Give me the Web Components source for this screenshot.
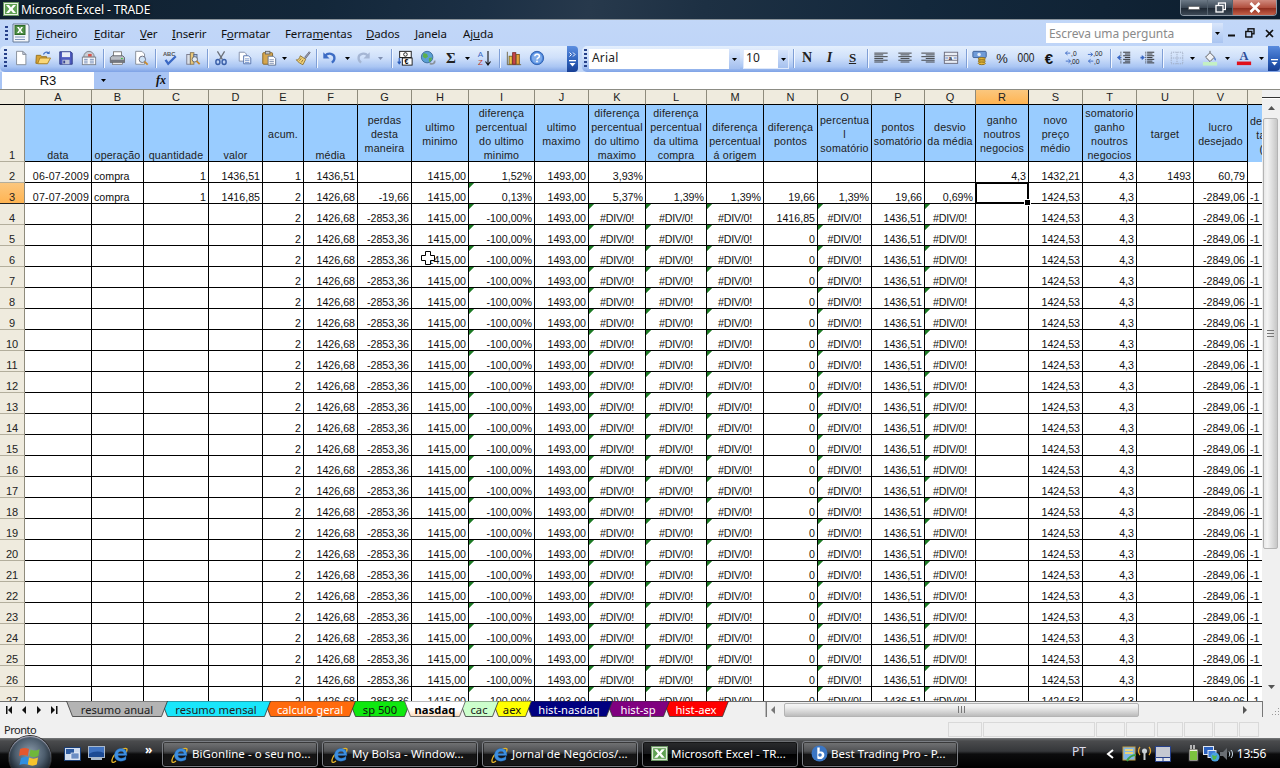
<!DOCTYPE html>
<html lang="pt">
<head>
<meta charset="utf-8">
<title>Microsoft Excel - TRADE</title>
<style>
html,body{margin:0;padding:0;width:1280px;height:768px;overflow:hidden;background:#f0f0f0}
body{display:flex;flex-direction:column;font-family:"Noto Sans","Liberation Sans",sans-serif}
</style>
</head>
<body>
<xl-titlebar>Microsoft Excel - TRADE</xl-titlebar>
<xl-menubar></xl-menubar>
<xl-toolbars></xl-toolbars>
<xl-formula cell="R3"></xl-formula>
<xl-sheet></xl-sheet>
<xl-tabs>
  <xl-tab w="102" bg="#b4b4b4" fg="#222" z="20">resumo anual</xl-tab>
  <xl-tab w="110" bg="#19e6fb" fg="#222" z="19">resumo mensal</xl-tab>
  <xl-tab w="92" bg="#ff6a0c" fg="#fff" z="18">calculo geral</xl-tab>
  <xl-tab w="62" bg="#0fe80f" fg="#111" z="17">sp 500</xl-tab>
  <xl-tab w="62" bg="#ffffff" fg="#000" z="30" active>nasdaq</xl-tab>
  <xl-tab w="40" bg="#ccffcc" fg="#222" z="15">cac</xl-tab>
  <xl-tab w="40" bg="#ffff00" fg="#111" z="14">aex</xl-tab>
  <xl-tab w="88" bg="#000080" fg="#fff" z="13">hist-nasdaq</xl-tab>
  <xl-tab w="64" bg="#800080" fg="#fff" z="12">hist-sp</xl-tab>
  <xl-tab w="66" bg="#ff0000" fg="#fff" z="11">hist-aex</xl-tab>
</xl-tabs>
<xl-status>Pronto</xl-status>
<xl-taskbar>
  <xl-taskbtn icon="ie">BiGonline - o seu no...</xl-taskbtn>
  <xl-taskbtn icon="ie">My Bolsa - Window...</xl-taskbtn>
  <xl-taskbtn icon="ie">Jornal de Negócios/...</xl-taskbtn>
  <xl-taskbtn icon="xl" active>Microsoft Excel - TR...</xl-taskbtn>
  <xl-taskbtn icon="b">Best Trading Pro - P...</xl-taskbtn>
</xl-taskbar>
<script>
const svg=(w,h,b,vb)=>`<svg xmlns="http://www.w3.org/2000/svg" width="${w}" height="${h}" viewBox="${vb||`0 0 ${w} ${h}`}" style="display:block">${b}</svg>`;
const drop=svg(5,3,'<path d="M0 0h5L2.500 3z" fill="#000"/>');
const dropG=svg(5,3,'<path d="M0 0h5L2.500 3z" fill="#7f8fb0"/>');
const excelIcon=(s)=>svg(s,s,'<rect x=".5" y="1.500" width="15" height="13" fill="#e8f2e2" stroke="#6d9a65"/><rect x="2" y="3" width="12" height="10" fill="#5fa052"/><path d="M3 4h3l2 2.500L10 4h3l-3.400 4L13 12h-3L8 9.500 6 12H3l3.400-4z" fill="#fff"/>','0 0 16 16');
const ieIcon=(s)=>svg(s,s,'<path d="M5 16c-2.500 2-4.500 2-4-1 .4-2 3-6.500 8-9.500 3-1.800 5.500-2.800 6.700-1.700 1 1-.4 3-1 4" fill="none" stroke="#e5b62a" stroke-width="1.300"/><path d="M3.500 10.500C3.500 6 6.500 3.500 10 3.500S16 6 16 10.500H7c.1 3 4.500 4 8 .6v3.400c-4 3-11.500 2-11.500-4zM7 8.500h5.800C12.600 5.500 7.400 5.500 7 8.500z" fill="#3d8fe0" stroke="#1a5aa8" stroke-width=".4"/>','0 0 18 18');
const I={
new:'<path d="M4 1.500h7l3.500 3.500v11.500H4z" fill="#fff" stroke="#7f8794"/><path d="M11 1.500V5h3.500z" fill="#d5deee" stroke="#7f8794"/>',
open:'<path d="M1.500 6h5l1 1.500h5.500V15h-12z" fill="#d6a235" stroke="#94701f"/><path d="M3 15.500l2.500-6.500h12l-3.500 6.500z" fill="#fbd878" stroke="#a67d20"/><path d="M9.500 5C10.500 2.500 13 1.500 15.500 3" fill="none" stroke="#3f6ec4" stroke-width="1.400"/><path d="M16.500 1v3.500H13z" fill="#3f6ec4"/>',
save:'<path d="M2 2h12.500L16 3.500V16H2z" fill="#4f5cc0" stroke="#2c3680"/><rect x="4.500" y="2.500" width="9" height="5.500" fill="#e8ecf7"/><rect x="5" y="11" width="8" height="5" fill="#bfc6d8"/><rect x="6" y="12" width="2" height="3" fill="#3a4590"/>',
perm:'<path d="M3 8c0-4 3-6.500 6-6.500S15 4 15 8z" fill="#c9ccd3" stroke="#7a7f88"/><rect x="8" y="4.500" width="4" height="3" fill="#d9534a"/><rect x="1.500" y="8" width="15" height="8.500" fill="#f6f7f9" stroke="#7a7f88"/><path d="M3.500 10.500h4M3.500 12.500h4M3.500 14.500h4M10 10.500h4.500M10 12.500h4.500M10 14.500h4.500" stroke="#6c87b8"/>',
print:'<rect x="5" y="2" width="9" height="6" fill="#fff" stroke="#777"/><path d="M1.500 8.500l2-2h12l2 2V14h-16z" fill="#b9bdc4" stroke="#5c6068"/><rect x="1.500" y="11" width="16" height="3.500" fill="#73777f"/><rect x="4" y="14" width="11" height="2.500" fill="#e8e8e8" stroke="#666" stroke-width=".7"/><rect x="13.500" y="9" width="2" height="1.300" fill="#3ecb45"/>',
preview:'<path d="M3 1.500h7l3 3v11.500H3z" fill="#fff" stroke="#7f8794"/><circle cx="10.500" cy="10.500" r="3.600" fill="#cfe3f6" stroke="#667"/><path d="M13 13l3.500 3.500" stroke="#c9892a" stroke-width="2"/>',
spell:'<text x="1" y="6.500" font-size="6.500" font-weight="700" font-family="Liberation Sans" fill="#555">ABC</text><path d="M4 11l3 4.500L15.500 7" fill="none" stroke="#3a68c4" stroke-width="2.600"/>',
research:'<rect x="2" y="5" width="4" height="11" fill="#d9dfe8" stroke="#778"/><rect x="6" y="3" width="4" height="13" fill="#e9c87a" stroke="#875"/><rect x="10" y="5" width="3.500" height="8" fill="#aac4e8" stroke="#568"/><circle cx="11" cy="10.500" r="3" fill="#dfeaf6" stroke="#666"/><path d="M13 12.500l3.500 3.500" stroke="#c9892a" stroke-width="2"/>',
cut:'<path d="M5 1.500l5.500 9M13 1.500l-5.500 9" stroke="#6a6f78" stroke-width="1.400" fill="none"/><ellipse cx="5.500" cy="13.500" rx="2.300" ry="2.800" fill="none" stroke="#3a5fa8" stroke-width="1.600"/><ellipse cx="12.500" cy="13.500" rx="2.300" ry="2.800" fill="none" stroke="#3a5fa8" stroke-width="1.600"/>',
copy:'<path d="M2.500 2.500h6l2 2v8h-8z" fill="#fff" stroke="#7d8aa5"/><path d="M7.500 6.500h5.500l2.500 2.500v6.500h-8z" fill="#fff" stroke="#4a6aa8"/><path d="M9 10h5M9 12h5M9 14h5" stroke="#6f8fc8"/>',
paste:'<rect x="2" y="3" width="11" height="13" rx="1" fill="#d6a64e" stroke="#7e5f20"/><rect x="5" y="1.500" width="5" height="3" fill="#c8ccd3" stroke="#666"/><path d="M8 7h6l2.500 2.500V17H8z" fill="#fff" stroke="#5a6c8a"/><path d="M9.500 11h5M9.500 13h5M9.500 15h5" stroke="#7c8db0"/>',
painter:'<path d="M11 8L16 2l1 1-5 6.500z" fill="#a8adb8" stroke="#667"/><path d="M6 6.500l6 4-3 6c-2-.5-6-3-7.500-5.500 2 .5 3.500-1 4.500-4.500z" fill="#f0d078" stroke="#8a7030"/><path d="M5 12l2-2.500M7 14l2-3" stroke="#8a7030" fill="none"/>',
undo:'<path d="M3.500 6.500C7 2.500 14 4 14 9c0 2-1 4-3 5" fill="none" stroke="#3d6cc4" stroke-width="2.600"/><path d="M1.500 2.500v7h7z" fill="#3d6cc4"/>',
redo:'<path d="M14.500 6.500C11 2.500 4 4 4 9c0 2 1 4 3 5" fill="none" stroke="#a5b6d4" stroke-width="2.600"/><path d="M16.500 2.500v7h-7z" fill="#a5b6d4"/>',
euro:'<rect x="3" y="1.500" width="13" height="7" fill="#fff" stroke="#111"/><rect x="6" y="9" width="11" height="8" fill="#fff" stroke="#111"/><text x="8.500" y="15.800" font-size="8" font-weight="700" font-family="Liberation Sans" fill="#000">€</text><circle cx="9.500" cy="5" r="2" fill="none" stroke="#111"/><path d="M2.500 9v6M.8 13l1.700 2.500L4.200 13" fill="none" stroke="#2a5bb8" stroke-width="1.300"/>',
globe:'<circle cx="8" cy="8" r="6.500" fill="#5a9fd4" stroke="#3a6a98"/><path d="M4 3.500l4 1 1 3-3 2-3-2zM10 9l3.500-.5-1 4-2.500 1z" fill="#5cb04a"/><path d="M11 15c3 1.500 6 0 5.500-3" fill="none" stroke="#8a929c" stroke-width="2"/>',
chart:'<path d="M1.500 2v14.500H17" fill="none" stroke="#6a6040"/><rect x="3.500" y="7" width="3.500" height="9" fill="#e8c44a" stroke="#7a6420"/><rect x="7.500" y="3" width="3.500" height="13" fill="#c9454a" stroke="#7a2a2a"/><rect x="11.500" y="5" width="3.500" height="11" fill="#e9a23b" stroke="#7a5a20"/>',
help:'<circle cx="9" cy="9" r="7.500" fill="#4b86dc" stroke="#2c5cab"/><circle cx="9" cy="9" r="5.800" fill="#7eabea"/><path d="M6.500 7c.3-3 5.200-3 5.200 0 0 2-2.700 1.800-2.700 3.800" fill="none" stroke="#fff" stroke-width="1.700"/><rect x="8.100" y="12" width="1.800" height="1.800" fill="#fff"/>',
alignL:'<path d="M1.500 3.500h15M1.500 5.500h10M1.500 7.500h15M1.500 9.500h10M1.500 11.500h15M1.500 13.500h10" stroke="#333"/>',
alignC:'<path d="M1.500 3.500h15M4 5.500h10M1.500 7.500h15M4 9.500h10M1.500 11.500h15M4 13.500h10" stroke="#333"/>',
alignR:'<path d="M1.500 3.500h15M6.500 5.500h10M1.500 7.500h15M6.500 9.500h10M1.500 11.500h15M6.500 13.500h10" stroke="#333"/>',
merge:'<rect x="1.500" y="2.500" width="15" height="12.500" fill="#e9eef6" stroke="#667"/><rect x="1.500" y="6.500" width="15" height="5" fill="#fff" stroke="#667"/><text x="6.500" y="10.700" font-size="6.500" font-weight="700" font-family="Liberation Sans" fill="#223">a</text><path d="M2.500 9H6M15.500 9H12" stroke="#3a68c4"/>',
curr:'<rect x="1" y="1.500" width="15" height="7" rx="1" fill="#6f9bd8" stroke="#3a5a90"/><circle cx="8" cy="5" r="2" fill="#dfeaf8"/><ellipse cx="11" cy="10" rx="4" ry="1.500" fill="#e8b93a" stroke="#8a6a18"/><ellipse cx="11" cy="12.500" rx="4" ry="1.500" fill="#e8b93a" stroke="#8a6a18"/><ellipse cx="11" cy="15" rx="4" ry="1.500" fill="#e8b93a" stroke="#8a6a18"/>',
outd:'<path d="M8 2.500h8M10 4.500h6M8 6.500h8M10 8.500h6M8 10.500h8M10 12.500h6M8 14.500h8" stroke="#222"/><path d="M5.500 2v14" stroke="#222" stroke-dasharray="1 1"/><path d="M1 8.500L4.500 5.500v2h1v2h-1v2z" fill="#3a68c4"/>',
ind:'<path d="M8 2.500h8M8 4.500h6M8 6.500h8M8 8.500h6M8 10.500h8M8 12.500h6M8 14.500h8" stroke="#222"/><path d="M6.500 2v14" stroke="#222" stroke-dasharray="1 1"/><path d="M5.500 8.500L2 5.500v2H.5v2H2v2z" fill="#3a68c4"/>',
border:'<rect x="2.500" y="2.500" width="13" height="13" fill="none" stroke="#98a4b8" stroke-dasharray="1 1"/><path d="M9 2.500v13M2.500 9h13" stroke="#98a4b8" stroke-dasharray="1 1"/>',
fill:'<path d="M4 8l5-5 5 5-5 5z" fill="#eef1f6" stroke="#555"/><path d="M9 3V1" stroke="#555"/><path d="M14 8c1.500 1.500 2 3 1 4-1-.5-1.500-2-1-4z" fill="#3a68c4"/><rect x="1" y="13.500" width="16" height="4" fill="#c4f0c4"/>',
color:'<text x="9" y="11.500" text-anchor="middle" font-size="14" font-weight="700" font-family="Liberation Serif" fill="#2c4c98">A</text><rect x="1" y="13" width="16" height="4" fill="#e0101c"/>',
inc:'<path d="M7 3.500H2M4 1.500l-2.500 2L4 5.500M2 12.500h5M5 10.500l2.500 2L5 14.500" stroke="#3a68c4" fill="none"/><text x="8" y="7" font-size="7.500" font-family="Liberation Sans" fill="#222">,0</text><text x="7" y="15.500" font-size="7.500" font-family="Liberation Sans" fill="#222">,00</text>',
dec:'<path d="M7 12.500H2M4 10.500l-2.500 2L4 14.500" stroke="#3a68c4" fill="none"/><path d="M1 5h5M4 3l2.500 2L4 7" stroke="#3a68c4" fill="none"/><text x="7" y="7" font-size="7.500" font-family="Liberation Sans" fill="#222">,00</text><text x="8" y="15.500" font-size="7.500" font-family="Liberation Sans" fill="#222">,0</text>'
};
const ic=n=>svg(16,16,I[n],'0 0 18 18');
const def=(name,html)=>{customElements.define(name,class extends HTMLElement{
  constructor(){super();this.attachShadow({mode:'open'});if(typeof html!=='function')this.shadowRoot.innerHTML=html;}
  connectedCallback(){if(typeof html==='function'&&!this.shadowRoot.firstChild)this.shadowRoot.innerHTML=html(this);}
});};

def('xl-titlebar',`<style>
:host{display:flex;align-items:center;flex:none;height:18px;padding-bottom:1px;position:relative;
background:linear-gradient(100deg,#10202f 0%,#13273a 25%,#1c3045 38%,#27394c 46%,#1d3043 55%,#13283c 72%,#0d1e2e 100%);border-bottom:1px solid #8a949c;color:#fff;font:12px "Noto Sans","Open Sans",sans-serif}
.ic{margin:0 2px 0 3px;display:block}
.t{flex:1;text-shadow:0 0 3px #000;letter-spacing:-.12px}
.btns{display:flex;height:16px;margin:0 3px 0 0;align-self:flex-start;border:1px solid #8c98a4;border-top:0;border-radius:0 0 4px 4px;overflow:hidden;box-sizing:border-box}
.b{display:flex;align-items:center;justify-content:center;border-right:1px solid #55626e;background:linear-gradient(#6d7a87,#3c4855 50%,#1c2631 52%,#3e4a57)}
.c{background:linear-gradient(#d08a7e,#b2503f 50%,#8c2a1c 52%,#c46048);border:0}
</style>
<span class="ic">${excelIcon(16)}</span><span class="t"><slot></slot></span>
<div class="btns">
<div class="b" style="width:26px">${svg(12,4,'<rect x=".5" y=".5" width="11" height="3" fill="#fff" stroke="#555" stroke-width=".6"/>')}</div>
<div class="b" style="width:24px">${svg(11,11,'<rect x="3.500" y="1" width="7" height="6.500" fill="none" stroke="#fff" stroke-width="1.300"/><rect x="1" y="3.500" width="7" height="6.500" fill="#404c58" stroke="#fff" stroke-width="1.300"/>')}</div>
<div class="b c" style="width:43px">${svg(12,11,'<path d="M1.500 1l9 9M10.500 1l-9 9" stroke="#fff" stroke-width="2.600"/>')}</div>
</div>`);

const menus=[['<u>F</u>icheiro',58],['<u>E</u>ditar',46],['<u>V</u>er',32],['<u>I</u>nserir',49],['F<u>o</u>rmatar',64],['Ferra<u>m</u>entas',81],['<u>D</u>ados',49],['<u>J</u>anela',48],['Aj<u>u</u>da',50]];
def('xl-menubar',`<style>
:host{display:flex;align-items:center;flex:none;height:26px;box-sizing:border-box;background:linear-gradient(#c2d7f8,#bfd5f8);color:#111;font:11.500px "Noto Sans","Open Sans",sans-serif;padding-left:5px;position:relative}
.g{width:3px;height:14px;margin-right:2px;background:repeating-linear-gradient(#27418a 0 2px,transparent 2px 4px)}
.d{width:22px;margin-right:4px}
.m{display:block;letter-spacing:-.15px}
.sp{flex:1}
.q{width:177px;height:20px;box-sizing:border-box;background:#fff;display:flex;align-items:center;color:#8a8a8a;font-size:12px;padding-left:3px;letter-spacing:-.05px}
.q span{flex:1}.q i{width:11px;align-self:stretch;background:linear-gradient(#d9e6fb,#a9c4f0);display:flex;align-items:center;justify-content:center}
.w{display:flex;align-items:center;padding-right:3px}
</style>
<span class="g"></span><span class="d">${svg(22,20,'<path d="M3 1h15l1 2v16H3z" fill="#f2f5fa" stroke="#667a98"/><rect x="5" y="2.500" width="10" height="9" fill="#4f8f45" stroke="#2e6a2a"/><path d="M7 4h2l1 2 1-2h2l-2 3 2 3h-2l-1-2-1 2H7l2-3z" fill="#fff"/><path d="M5 14h10M5 16.500h10" stroke="#7d93b8"/>')}</span>
${menus.map(m=>`<span class="m" style="width:${m[1]}px">${m[0]}</span>`).join('')}
<span class="sp"></span>
<span class="q"><span>Escreva uma pergunta</span><i>${drop}</i></span>
<span class="w">
<span style="width:16px;display:flex;justify-content:center">${svg(7,8,'<rect y="5.500" width="7" height="2" fill="#111"/>')}</span>
<span style="width:22px;display:flex;justify-content:center">${svg(10,10,'<rect x="3" y=".8" width="6" height="5" fill="none" stroke="#111" stroke-width="1.400"/><rect x=".8" y="3.500" width="6" height="5.500" fill="#c2d7f8" stroke="#111" stroke-width="1.400"/>')}</span>
<span style="width:16px;display:flex;justify-content:center">${svg(9,9,'<path d="M1 1l7 7M8 1L1 8" stroke="#111" stroke-width="1.600"/>')}</span>
</span>`);

const grip='G',sep='S',dr='D',drg='E';
const tb1=[[5.5,grip],[21,'new'],[43,'open'],[66,'save'],[89,'perm'],[103.5,sep],[117,'print'],[141,'preview'],[155.5,sep],[170,'spell'],[193,'research'],[207.5,sep],[221,'cut'],[245,'copy'],[269,'paste'],[284,dr],[303,'painter'],[316.5,sep],[330,'undo'],[347,dr],[363,'redo'],[380,drg],[391.5,sep],[405,'euro'],[428,'globe'],[451,['<span style="font:700 15px Liberation Serif;color:#222">Σ</span>',14]],[467,dr],[483,['<span style="display:flex;align-items:center">'+svg(9,16,'<text x="4.500" y="7" text-anchor="middle" font-size="8" font-family="Liberation Sans" fill="#3a68c4">A</text><text x="4.500" y="15" text-anchor="middle" font-size="8" font-family="Liberation Sans" fill="#c0392b">Z</text>')+svg(6,16,'<path d="M3 1v13M.5 11.500L3 15l2.500-3.500" fill="none" stroke="#111" stroke-width="1.100"/>')+'</span>',15]],[499.5,sep],[514,'chart'],[537,'help']];
const tb2=[[585,grip],[664.5,['<span class="sel" style="width:151px"><em>Arial</em><i>'+drop+'</i></span>',151]],[766,['<span class="sel" style="width:46px;outline:1px solid #dfe9fb;outline-offset:-1px"><em>10</em><i>'+drop+'</i></span>',46]],[793,sep],[807,['<b style="font:900 14px Liberation Serif;color:#222">N</b>',14]],[829.5,['<i style="font:italic 700 14px Liberation Serif;color:#222">I</i>',14]],[852.5,['<u style="font:700 13px Liberation Serif;color:#222">S</u>',14]],[867.5,sep],[881,'alignL'],[905,'alignC'],[928,'alignR'],[951,'merge'],[966,sep],[980,'curr'],[1002,['<span style="font:13px Liberation Sans;color:#222">%</span>',14]],[1026,['<span style="font:12px Liberation Sans;color:#222;display:inline-block;transform:scaleX(.85)">000</span>',18]],[1049,['<b style="font:900 15px Liberation Sans;color:#111">€</b>',14]],[1072,'inc'],[1095,'dec'],[1110,sep],[1124,'outd'],[1148,'ind'],[1162.5,sep],[1177,'border'],[1192,dr],[1210,'fill'],[1227,dr],[1244,'color'],[1261,dr]];
function row(list,start){let x=start,o='';for(const [c,k] of list){let w=18,h;
 if(k===grip){w=3;h='<span class="g"></span>'}else if(k===sep){w=1;h='<span class="s"></span>'}else if(k===dr){w=5;h=drop}else if(k===drg){w=5;h=dropG}else if(Array.isArray(k)){w=k[1];h=k[0]}else h=ic(k);
 const l=c-w/2-x;x=c+w/2;o+=`<span class="it" style="width:${w}px;margin-left:${l}px">${h}</span>`;}return o;}
const r1=row(tb1,0),r2=row(tb2,582);
const ovf=(w,hasTop)=>`<span class="ov" style="width:${w}px">${hasTop?svg(7,5,'<path d="M.5 .5L2.500 2.500.5 4.500M4 .5l2 2-2 2" fill="none" stroke="#fff"/>'):'<span style="height:5px"></span>'}${svg(7,7,'<rect width="7" height="1.300" y="0" fill="#fff"/><path d="M.5 3h6L3.500 6.500z" fill="#fff"/>')}</span>`;
def('xl-toolbars',`<style>
:host{display:flex;flex:none;height:26px;background:#c2d7f8;box-sizing:border-box;align-items:stretch;overflow:hidden}
.tb{display:flex;align-items:center;background:linear-gradient(#e4effd,#cfe0fa 45%,#a9c5f3 80%,#7fa3e6);border-radius:5px 0 0 5px;flex:none;height:26px;box-sizing:border-box;padding-bottom:2px}
.it{display:flex;flex:none;align-items:center;justify-content:center;height:24px;white-space:nowrap}
.g{width:3px;height:18px;background:repeating-linear-gradient(#27418a 0 2px,transparent 2px 4px)}
.s{width:1px;height:19px;background:#7f9fd6;box-shadow:1px 0 0 #f2f7ff}
.sel{display:flex;align-items:stretch;height:20px;margin-top:2px;box-sizing:border-box;background:#fff;font:12px "Noto Sans",sans-serif;color:#222;padding-left:3px;letter-spacing:.2px;justify-content:space-between}
.sel em{font-style:normal;line-height:17px}
.sel i{width:11px;flex:none;background:linear-gradient(#d9e6fb,#a3bfef);display:flex;align-items:center;justify-content:center}
.ov{display:flex;flex-direction:column;align-items:center;justify-content:center;gap:3px;flex:none;height:26px;background:linear-gradient(#5c8ee0,#2b5eb8 60%,#173f94);border-radius:0 4px 4px 0}
.ov span{display:block}
</style>
<div class="tb" style="width:567px">${r1}</div>${ovf(11,true)}
<div style="width:4px;background:#c2d7f8"></div>
<div class="tb" style="flex:1">${r2}<span style="flex:1"></span>${ovf(12,false)}</div>`);

def('xl-formula',(el)=>`<style>
:host{display:flex;flex:none;height:18px;box-sizing:border-box;background:#a8c4f4;border-bottom:1px solid #8c8c84;font:13px "Liberation Sans",sans-serif;color:#111}
.n{width:92px;box-sizing:border-box;background:#fff;height:17px;margin-left:2px;text-align:center;line-height:17px}
.d{display:flex;align-items:center;padding-left:7px;box-sizing:border-box;width:62px}
.f{width:13px;font:italic 700 12px "Liberation Serif",serif;line-height:16px;text-align:left}
.i{flex:1;background:#fff;height:17px}
</style><div class="n">${el.getAttribute('cell')}</div><div class="d">${drop}</div><div class="f">fx</div><div class="i"></div>`);

const edges=[24,91,143,208,262,303,357,411,468,534,588,645,706,763,817,871,924,975,1028,1082,1136,1193,1247];
const cols='ABCDEFGHIJKLMNOPQRSTUV'.split('').concat(['']);
const head=[['data','b'],['operação','b'],['quantidade','b'],['valor','b'],['acum.'],['média','b'],['perdas<br>desta<br>maneira'],['ultimo<br>minimo'],['diferença<br>percentual<br>do ultimo<br>minimo'],['ultimo<br>maximo'],['diferença<br>percentual<br>do ultimo<br>maximo'],['diferença<br>percentual<br>da ultima<br>compra'],['diferença<br>percentual<br>á origem','b'],['diferença<br>pontos'],['percentua<br>l<br>somatório'],['pontos<br>somatório'],['desvio<br>da média'],['ganho<br>noutros<br>negocios'],['novo<br>preço<br>médio'],['somatorio<br>ganho<br>noutros<br>negocios'],['target'],['lucro<br>desejado'],['de<br>&nbsp;&nbsp;ta<br>&nbsp;&nbsp;&nbsp;(','l']];
const D='#DIV/0!';
const r2d=['06-07-2009','compra','1','1436,51','1','1436,51','','1415,00','1,52%','1493,00','3,93%','','','','','','','4,3','1432,21','4,3','1493','60,79',''];
const r3d=['07-07-2009','compra','1','1416,85','2','1426,68','-19,66','1415,00','0,13%','1493,00','5,37%','1,39%','1,39%','19,66','1,39%','19,66','0,69%','','1424,53','4,3','','-2849,06','-1'];
const rN=n=>['','','','','2','1426,68','-2853,36','1415,00','-100,00%','1493,00',D,D,D,n,D,'1436,51',D,'','1424,53','4,3','','-2849,06','-1'];
function sheetHtml(){
 let w=[edges[0]+1];for(let i=1;i<edges.length;i++)w.push(edges[i]-edges[i-1]);w.push(60);
 let h=`<colgroup>${w.map(x=>`<col style="width:${x}px">`).join('')}</colgroup>`;
 h+=`<tr class="ch"><th></th>${cols.map(c=>`<th class="${c==='R'?'on':''}">${c}</th>`).join('')}</tr>`;
 h+=`<tr class="r1"><th class="rh">1</th>${head.map(c=>`<td class="${c[1]||'m'}"><div class="in">${c[0]}</div></td>`).join('')}</tr>`;
 for(let r=2;r<=27;r++){
  const d=r===2?r2d:r===3?r3d:rN(r===4?'1416,85':'0');
  h+=`<tr><th class="rh${r===3?' on':''}">${r}</th>`;
  d.forEach((v,i)=>{let c=[];
   if(i===0)c.push('dt');
   if(i===1||i===22)c.push('lf');
   if(v===D)c.push('er');
   if((r>=3&&i===8)||(r>=4&&(i===10||i===11||i===12||i===14||i===16)))c.push('tr');
   if(r===3&&i===17)c.push('sel');
   h+=`<td class="${c.join(' ')}">${r===3&&i===17?'<span class="box"><span class="hd"></span></span>':''}${v}</td>`;});
  h+='</tr>';
 }
 return h;
}
def('xl-sheet',`<style>
:host{display:flex;flex:none;height:611px;background:#fff;position:relative;overflow:hidden}
.g{width:1262px;height:611px;overflow:hidden;flex:none}
table{border-collapse:separate;border-spacing:0;table-layout:fixed;width:1308px;font:10.670px "Liberation Sans",Arial,sans-serif;color:#111}
th,td{box-sizing:border-box;padding:0;overflow:hidden;white-space:nowrap}
tr{height:21px}
tr.ch{height:15px}
tr.r1{height:57px}
.ch th{background:#efebde;border-right:1px solid #8f8b7c;border-bottom:1px solid #000;font:400 11px "Liberation Sans",sans-serif;height:15px;line-height:13px;padding-top:1px;color:#222;text-align:center}
.ch th.on{background:linear-gradient(#fbc77e,#ffb452);border-right-color:#222}
.rh{background:#efebde;border-right:1px solid #8f8b7c;border-bottom:1px solid #b3ae9c;font:400 11px "Liberation Sans",sans-serif;color:#222;text-align:center;vertical-align:bottom;line-height:12px}
.rh.on{background:linear-gradient(#fbc77e,#ffb452);border-bottom-color:#222}
td{border-right:1px solid #000;border-bottom:1px solid #000;text-align:right;vertical-align:bottom;padding:0 2px 0 0;line-height:11px;position:relative}
.r1 td{background:#99ccff;text-align:center;padding:0;line-height:14px;letter-spacing:.18px;color:#222;vertical-align:middle;overflow:visible}
.r1 .in{margin:1px 0 -1px}
.r1 td.b{vertical-align:bottom}
.r1 td.l{text-align:left;padding-left:2px;border:0;overflow:hidden}
td.lf{text-align:left;padding-left:2px}
td.dt{letter-spacing:.17px}
td.er{text-align:center;letter-spacing:-.25px;padding:0}
td.tr{background:linear-gradient(135deg,#1c7a24 3.500px,transparent 3.600px) no-repeat 0 0/6px 5px}
.box{position:absolute;left:-1px;top:-1px;right:-1px;bottom:-1px;border:2px solid #000;outline:1px solid #fff;outline-offset:-3px}
.sel{overflow:visible;z-index:3}
.hd{position:absolute;right:-4px;bottom:-4px;width:5px;height:5px;background:#000;border:1px solid #fff}
.v{width:18px;flex:none;background:#f0f0f0;display:flex;flex-direction:column;align-items:center;position:relative}
.v .top{height:7px;width:100%;border-bottom:1px solid #333;box-shadow:0 1px 0 #fff;flex:none}
.v .up{height:20px;display:flex;align-items:center;justify-content:center;flex:none}
.v .th{width:15px;height:431px;margin-left:-2px;flex:none;box-sizing:border-box;border:1px solid #b4b4b4;border-radius:2px;background:linear-gradient(90deg,#e8e8e8,#f4f4f4 25%,#e2e2e2 55%,#c6c6c6);display:flex;align-items:center;justify-content:center}
.v .sp{flex:1}
.v .dn{height:14px;display:flex;align-items:flex-start;justify-content:center;flex:none;padding-bottom:2px}
.cur{position:absolute;left:421px;top:161px}
</style>
<div class="g"><table>${sheetHtml()}</table></div>
<div class="v"><div class="top"></div><div class="up">${svg(7,4,'<path d="M3.500 0L7 4H0z" fill="#555"/>')}</div>
<div class="th">${svg(7,7,'<path d="M0 .5h7M0 3.500h7M0 6.500h7" stroke="#777"/>')}</div><div class="sp"></div>
<div class="dn">${svg(7,4,'<path d="M0 0h7L3.500 4z" fill="#555"/>')}</div></div>
<div class="cur">${svg(14,14,'<path d="M4.500 .5h5v4h4v5h-4v4h-5v-4h-4v-5h4z" fill="#fff" stroke="#000"/>')}</div>`);

const navA=(d)=>svg(7,8,d);
def('xl-tabs',`<style>
:host{display:flex;flex:none;height:16px;background:#f0f0f0;box-sizing:border-box;align-items:stretch;border-top:1px solid #6d6d6d;position:relative;z-index:2}
.nav{display:flex;width:66px;flex:none;align-items:center;padding-left:6px;box-sizing:border-box}
.nav span{display:flex;width:16.300px}
.tabs{display:flex;width:699px;flex:none;margin-top:-1px}
.spl{width:2px;border-left:1px solid #bbb;border-right:1px solid #777;flex:none;box-sizing:border-box}
.h{flex:1;display:flex;align-items:center;width:497px}
.lft{width:13px;display:flex;justify-content:center}
.th{height:14px;width:355px;margin-left:4px;box-sizing:border-box;border:1px solid #b4b4b4;border-radius:2px;background:linear-gradient(#f6f6f6,#ececec 30%,#d8d8d8 60%,#bcbcbc);display:flex;align-items:center;justify-content:center}
.rgt{margin-left:auto;width:17px;display:flex;justify-content:center;margin-right:8px}
.gr{width:18px;flex:none;border-left:1px solid #777;box-sizing:border-box;display:flex;align-items:flex-end;justify-content:flex-end;margin-top:-1px;background:#f0f0f0}
</style>
<div class="nav">
<span>${navA('<path d="M0 0h1.500v8H0zM6 0v8L2 4z" fill="#111"/>')}</span>
<span>${navA('<path d="M5 0v8L1 4z" fill="#111"/>')}</span>
<span>${navA('<path d="M1 0v8l4-4z" fill="#111"/>')}</span>
<span>${navA('<path d="M0 0v8l4-4zM5 0h1.500v8H5z" fill="#111"/>')}</span>
</div>
<div class="tabs"><slot></slot></div><div class="spl"></div>
<div class="h"><div class="lft">${navA('<path d="M5 0v8L1 4z" fill="#777"/>')}</div>
<div class="th">${svg(7,7,'<path d="M.5 0v7M3.500 0v7M6.500 0v7" stroke="#777"/>')}</div>
<div class="rgt">${navA('<path d="M1 0v8l4-4z" fill="#555"/>')}</div></div>
<div class="gr">${svg(10,10,'<path d="M8 1h1v1H8zM5 4h1v1H5zM8 4h1v1H8zM2 7h1v1H2zM5 7h1v1H5zM8 7h1v1H8z" fill="#999"/>')}</div>`);

def('xl-tab',(el)=>{const w=+el.getAttribute('w'),bg=el.getAttribute('bg'),fg=el.getAttribute('fg'),z=el.getAttribute('z'),act=el.hasAttribute('active');
return `<style>
:host{display:flex;flex:none;width:${w-7}px;height:16px;box-sizing:content-box;position:relative;z-index:${z};align-items:center;justify-content:center;color:${fg};font:${act?'700':'400'} 11.200px "Noto Sans","Open Sans",sans-serif;letter-spacing:${act?'.1px':'0'};line-height:15px}
.bg{position:absolute;left:0;top:0}
.l{position:relative;left:3.500px}
</style><div class="bg">${svg(w,16,`<defs><linearGradient id="a" x1="0" y1="0" x2="0" y2="1"><stop offset="0" stop-color="${bg}"/><stop offset=".55" stop-color="${bg}"/><stop offset="1" stop-color="${act?'#fcd9b8':bg}"/></linearGradient></defs><path d="M.5 0L6.500 15.500H${w-6.5}L${w-.5} 0z" fill="url(#a)" stroke="${act?'#555':'#333'}" stroke-width=".8"/>`)}</div><span class="l"><slot></slot></span>`});

const panels=[[948,982],[983,1095],[1096,1125],[1126,1155],[1157,1183],[1184,1213],[1214,1238],[1239,1259]];
def('xl-status',`<style>
:host{display:flex;flex:none;height:21px;background:#f0f0f0;box-sizing:border-box;font:11px "Noto Sans","Open Sans",sans-serif;letter-spacing:-.5px;color:#222;position:relative;padding-left:4px}
.t{width:944px;flex:none;line-height:25px;height:21px}
.p{height:15px;margin-top:5px;box-sizing:border-box;border:1px solid #d9d9d9;flex:none}
</style><div class="t"><slot></slot></div>${panels.map((p,i)=>`<div class="p" style="width:${p[1]-p[0]}px;margin-left:${i?p[0]-panels[i-1][1]:0}px"></div>`).join('')}`);

def('xl-taskbar',`<style>
:host{display:flex;flex:none;height:30px;box-sizing:border-box;background:linear-gradient(#626466 0,#4a4b4d 2px,#35373a 42%,#0c0c0d 52%,#000 100%);border-top:1px solid #6f7173;align-items:center;color:#fff;font:11.500px "Noto Sans","Open Sans",sans-serif;position:relative}
.orb{position:absolute;left:9px;top:-3px;width:42px;height:42px;border-radius:50%;background:radial-gradient(circle at 50% 40%,#8a9aaa 0,#4c5c6c 45%,#161e26 75%,#0a0a0a 100%);box-shadow:0 0 0 1px #2a2a2a,inset 0 1px 1px #aab;display:flex;align-items:center;justify-content:center}
.ql{display:flex;align-items:center;margin-left:64px;width:98px;flex:none;height:100%}
.tasks{display:flex;gap:4px;flex:none}
.pt{margin-left:114px;width:34px;flex:none;color:#dde;font-size:12px;margin-top:-5px}
.tray{display:flex;align-items:center;flex:none}
.clk{margin-left:auto;padding-right:14px;font-size:12px;letter-spacing:-.3px}
.mm{font-weight:700;font-size:12px;letter-spacing:-1px;margin:-8px 0 0 4px;width:16px}
</style>
<div class="orb">${svg(26,26,'<path d="M3 5c3-1.500 6-1.500 9 0l-1.200 7c-3-1.500-6-1.500-8.800 0z" fill="#e4572e"/><path d="M13.500 5.500c3 1.500 6 1.500 9-.2L21.300 12c-3 1.500-6 1.500-9 0z" fill="#6fb83a"/><path d="M2 14c3-1.500 6-1.500 8.800 0L9.500 21c-3-1.500-6-1.500-9 0z" fill="#2f8fe0" transform="translate(2 0)"/><path d="M12 13.500c3 1.500 6 1.500 9 0L19.800 20.500c-3 1.500-6 1.500-9 0z" fill="#f6c32c"/>')}</div>
<div class="ql">
<span style="width:24px;display:flex">${svg(17,16,'<rect x=".5" y="1.500" width="16" height="13" fill="#cfdcef" stroke="#1d3f74"/><rect x="2" y="3" width="8" height="5" fill="#2c5aa0"/><rect x="7" y="7" width="8" height="6" fill="#6c8ec4" stroke="#fff" stroke-width=".6"/>')}</span>
<span style="width:23px;display:flex">${svg(17,15,'<rect x=".5" y=".5" width="16" height="11" fill="#3f72c0" stroke="#a8b8cc"/><path d="M1 8c5-3 10-3 15-1v4H1z" fill="#1c4a94"/><rect x="3" y="12" width="11" height="2" fill="#a8b8cc"/>')}</span>
<span style="width:30px;display:flex">${ieIcon(18)}</span>
<span class="mm">»</span>
</div>
<div class="tasks"><slot></slot></div>
<div class="pt">PT</div>
<div class="tray">
<span style="width:16px;display:flex">${svg(9,10,'<path d="M7 1L2 5l5 4" fill="none" stroke="#fff" stroke-width="2"/>')}</span>
<span style="width:15px;display:flex">${svg(15,16,'<rect x="1" y="1" width="12" height="13" fill="#7fb5e8" stroke="#c5a24a"/><path d="M3 4h8M3 7h8" stroke="#e9d37a" stroke-width="2"/><path d="M5 15c2-4 5-6 9-6" stroke="#3ca24a" stroke-width="2" fill="none"/>')}</span>
<span style="width:18px;display:flex">${svg(15,16,'<circle cx="7.500" cy="5" r="2.500" fill="#cfd6dc"/><rect x="6.500" y="5" width="2" height="9" fill="#c8cdd2"/><path d="M3 1c-2 2-2 6 0 8M12 1c2 2 2 6 0 8" fill="none" stroke="#e8a82c" stroke-width="1.300"/>')}</span>
<span style="width:31px;display:flex">${svg(16,16,'<rect x=".5" y=".5" width="15" height="11" fill="#c5c9d2" stroke="#26408a"/><path d="M.5 11.500h15v4H.5zM8 11.500v4" fill="#dfe3ea" stroke="#26408a"/>')}</span>
<span style="width:17px;display:flex">${svg(14,17,'<rect x="3" y="4" width="9" height="12" fill="#f0efe0" stroke="#333"/><rect x="4" y="6" width="7" height="9" fill="#7cc23e"/><path d="M5 0v4M8 0v4" stroke="#ddd" stroke-width="1.500"/>')}</span>
<span style="width:17px;display:flex">${svg(17,17,'<rect x=".5" y="1.500" width="10" height="8" fill="#2c62c0" stroke="#dfe6f2"/><rect x="5" y="5.500" width="8" height="7" fill="#3d7cd8" stroke="#dfe6f2"/><circle cx="12" cy="12" r="4.500" fill="#4aa2e0"/><path d="M9 10l3 1 2-1-1 4-3 1z" fill="#54b848"/>')}</span>
<span style="width:15px;display:flex">${svg(14,14,'<path d="M0 5h3l4-4v12L3 9H0z" fill="#6a6e74"/><path d="M9 4.500c1 1.500 1 3.500 0 5M11 3c2 2 2 6 0 8" fill="none" stroke="#cfe0ee"/>')}</span>
</div>
<div class="clk">13:56</div>`);

def('xl-taskbtn',(el)=>{const a=el.hasAttribute('active'),t=el.getAttribute('icon');
const ico=t==='ie'?ieIcon(18):t==='xl'?excelIcon(17):svg(17,17,'<circle cx="8.500" cy="8.500" r="8" fill="#3b76c4"/><path d="M6.300 2.500h2.400v4.300c2.600-1 4.700.8 4.700 3.100 0 2.600-2.300 4.200-4.500 4.200-1.300 0-2-.3-2.600-.7z" fill="#fff"/><circle cx="9" cy="10" r="1.800" fill="#3b76c4"/>');
return `<style>
:host{display:flex;flex:none;align-items:center;box-sizing:border-box;width:156px;height:26px;border-radius:3px;padding-left:8px;gap:1px;white-space:nowrap;overflow:hidden;border:1px solid ${a?'#6c6e72':'#7b7e84'};box-shadow:inset 0 0 0 1px rgba(0,0,0,.5);
background:${a?'linear-gradient(#2a2b2d,#16171a 48%,#000 52%,#0d0d0f)':'linear-gradient(rgba(255,255,255,.24),rgba(255,255,255,.1) 48%,rgba(255,255,255,.03) 52%,rgba(255,255,255,.09))'};color:#fff;font:11.500px "Noto Sans","Open Sans",sans-serif;letter-spacing:.05px}
span{display:flex;flex:none;margin-right:2px}
</style><span>${ico}</span><slot></slot>`});
</script>
</body>
</html>
